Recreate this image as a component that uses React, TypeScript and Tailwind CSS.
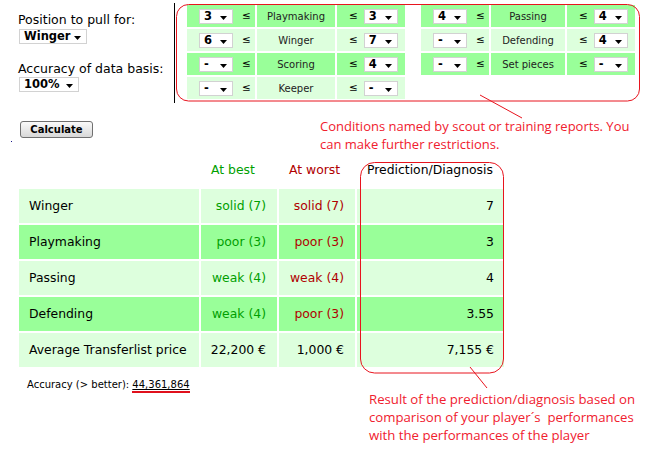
import React from 'react';

type Cell = { lo: string; skill: string; hi: string } | null;

const leftSkills: Cell[] = [
  { lo: '3', skill: 'Playmaking', hi: '3' },
  { lo: '6', skill: 'Winger', hi: '7' },
  { lo: '-', skill: 'Scoring', hi: '4' },
  { lo: '-', skill: 'Keeper', hi: '-' },
];

const rightSkills: Cell[] = [
  { lo: '4', skill: 'Passing', hi: '4' },
  { lo: '-', skill: 'Defending', hi: '4' },
  { lo: '-', skill: 'Set pieces', hi: '-' },
  null,
];

const results = [
  { label: 'Winger', best: 'solid (7)', worst: 'solid (7)', pred: '7', colored: true },
  { label: 'Playmaking', best: 'poor (3)', worst: 'poor (3)', pred: '3', colored: true },
  { label: 'Passing', best: 'weak (4)', worst: 'weak (4)', pred: '4', colored: true },
  { label: 'Defending', best: 'weak (4)', worst: 'poor (3)', pred: '3.55', colored: true },
  { label: 'Average Transferlist price', best: '22,200 €', worst: '1,000 €', pred: '7,155 €', colored: false },
];

function Arrow() {
  return (
    <svg width="7" height="4" viewBox="0 0 7 4" className="absolute right-[5px] bottom-[3px]">
      <path d="M0 0 H7 L3.5 4 Z" fill="#000" />
    </svg>
  );
}

function Select({ value, width }: { value: string; width: string }) {
  return (
    <div
      className={`relative h-[15px] ${width} bg-white border border-[#d2d2d2] pl-[4px] text-[11.5px] font-bold leading-[13px] text-black`}
    >
      {value}
      <Arrow />
    </div>
  );
}

function SkillRow({ cell, bg }: { cell: Cell; bg: string }) {
  if (!cell) {
    return (
      <>
        <div />
        <div />
        <div />
      </>
    );
  }
  return (
    <>
      <div className={`${bg} flex items-center pl-[12px] gap-[9px] text-[10.5px]`}>
        <Select value={cell.lo} width="w-[34px]" />
        <span>≤</span>
      </div>
      <div className={`${bg} flex items-center justify-center text-[10px] text-[#222]`}>{cell.skill}</div>
      <div className={`${bg} flex items-center pl-[12px] gap-[6px] text-[10.5px]`}>
        <span>≤</span>
        <Select value={cell.hi} width="w-[34px]" />
      </div>
    </>
  );
}

export default function App() {
  const rowBg = (i: number) => (i % 2 === 0 ? 'bg-[#99ff99]' : 'bg-[#ddffdd]');

  return (
    <div className="relative w-[645px] h-[463px] overflow-hidden bg-white text-black font-['DejaVu_Sans',sans-serif]">
      {/* search conditions */}
      <div className="flex h-[105px]">
        <div className="w-[174px] pl-[18px] pt-[12px] text-[12.5px] leading-[15px]">
          <div>Position to pull for:</div>
          <div className="ml-[1px] mt-[2px]">
            <Select value="Winger" width="w-[68px]" />
          </div>
          <div className="mt-[17px]">Accuracy of data basis:</div>
          <div className="ml-[1px] mt-[1px]">
            <Select value="100%" width="w-[60px]" />
          </div>
        </div>
        <div className="w-px h-[100px] mt-[3px] bg-black" />
        <div className="ml-[12px] mt-[5px] grid grid-cols-[68px_78px_68px_12px_68px_74px_68px] grid-rows-[repeat(4,22px)] gap-[2px] h-fit">
          {leftSkills.map((c, i) => (
            <React.Fragment key={i}>
              <SkillRow cell={c} bg={rowBg(i)} />
              <div />
              <SkillRow cell={rightSkills[i]} bg={rowBg(i)} />
            </React.Fragment>
          ))}
        </div>
      </div>

      <div className="flex">
        <div className="w-[320px] pl-[20px] pt-[16px]">
          <button className="block w-[73px] h-[17px] rounded-[3px] border border-[#707070] bg-gradient-to-b from-[#fafafa] to-[#d8d8d8] text-[10px] font-bold leading-[14px] text-black">
            Calculate
          </button>
        </div>
        <div className="pt-[12px] whitespace-nowrap font-['Open_Sans',sans-serif] text-[13px] leading-[18px] text-[#f0202e]">
          Conditions named by scout or training reports. You
          <br />
          can make further restrictions.
        </div>
      </div>

      {/* prediction table */}
      <div className="ml-[19px] mt-[8px] grid grid-cols-[180px_76px_76px_147px] grid-rows-[26px_repeat(5,34px)] gap-[2px] text-[12.4px] w-fit">
        <div />
        <div className="pl-[10px] leading-[18px] text-[#00a000]">At best</div>
        <div className="pl-[10px] leading-[18px] text-[#b00000]">At worst</div>
        <div className="pl-[10px] leading-[18px]">Prediction/Diagnosis</div>
        {results.map((r, i) => {
          const bg = i % 2 === 0 ? 'bg-[#ddffdd]' : 'bg-[#99ff99]';
          return (
            <React.Fragment key={r.label}>
              <div className={`${bg} flex items-center pl-[10px]`}>{r.label}</div>
              <div className={`${bg} flex items-center justify-end pr-[11px] ${r.colored ? 'text-[#00a000]' : ''}`}>
                {r.best}
              </div>
              <div className={`${bg} flex items-center justify-end pr-[11px] ${r.colored ? 'text-[#b00000]' : ''}`}>
                {r.worst}
              </div>
              <div className={`${bg} flex items-center justify-end pr-[10px]`}>{r.pred}</div>
            </React.Fragment>
          );
        })}
      </div>

      <div className="flex">
        <div className="w-[369px] pl-[27px] pt-[11px] text-[10px] leading-[14px]">
          Accuracy (&gt; better):{' '}
          <span className="underline border-b-2 border-[#e0101c] pb-px">44,361,864</span>
        </div>
        <div className="pt-[23px] whitespace-nowrap font-['Open_Sans',sans-serif] text-[13.2px] leading-[18px] text-[#f0202e]">
          Result of the prediction/diagnosis based on
          <br />
          comparison of your player´s&nbsp; performances
          <br />
          with the performances of the player
        </div>
      </div>

      {/* hand-drawn callouts */}
      <svg className="absolute left-0 top-0 pointer-events-none" width="645" height="463">
        <rect x="176.5" y="4.5" width="463" height="96.5" rx="12" fill="none" stroke="#e8141e" />
        <line x1="480" y1="95" x2="522" y2="118" stroke="#e8141e" />
        <rect x="360.5" y="162.5" width="143" height="210.5" rx="14" fill="none" stroke="#e8141e" />
        <line x1="470" y1="367" x2="487" y2="388" stroke="#e8141e" />
        <rect x="11" y="141" width="1" height="1" fill="#1a1a8c" />
      </svg>
    </div>
  );
}
